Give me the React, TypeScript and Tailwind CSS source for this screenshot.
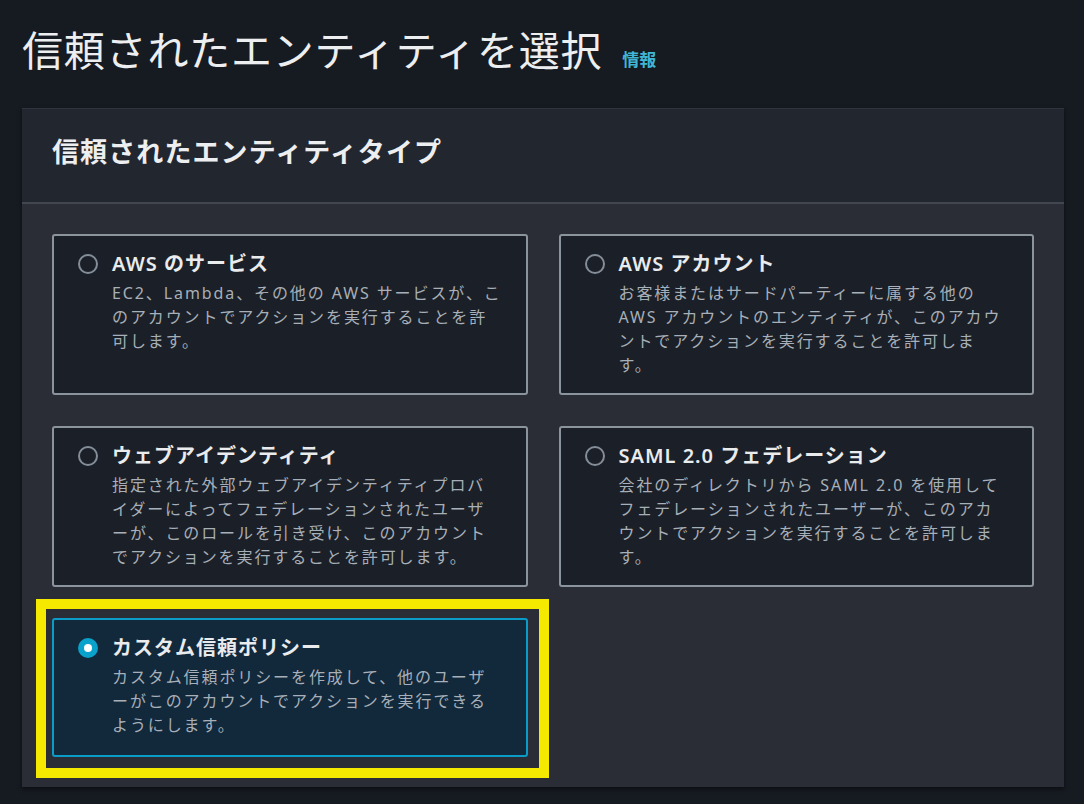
import React from 'react';

interface EntityOption {
  id: string;
  title: string;
  lines: string[];
}

const options: EntityOption[] = [
  {
    id: 'aws-service',
    title: 'AWS のサービス',
    lines: [
      'EC2、Lambda、その他の AWS サービスが、こ',
      'のアカウントでアクションを実行することを許',
      '可します。',
    ],
  },
  {
    id: 'aws-account',
    title: 'AWS アカウント',
    lines: [
      'お客様またはサードパーティーに属する他の',
      'AWS アカウントのエンティティが、このアカウ',
      'ントでアクションを実行することを許可しま',
      'す。',
    ],
  },
  {
    id: 'web-identity',
    title: 'ウェブアイデンティティ',
    lines: [
      '指定された外部ウェブアイデンティティプロバ',
      'イダーによってフェデレーションされたユーザ',
      'ーが、このロールを引き受け、このアカウント',
      'でアクションを実行することを許可します。',
    ],
  },
  {
    id: 'saml',
    title: 'SAML 2.0 フェデレーション',
    lines: [
      '会社のディレクトリから SAML 2.0 を使用して',
      'フェデレーションされたユーザーが、このアカ',
      'ウントでアクションを実行することを許可しま',
      'す。',
    ],
  },
  {
    id: 'custom',
    title: 'カスタム信頼ポリシー',
    lines: [
      'カスタム信頼ポリシーを作成して、他のユーザ',
      'ーがこのアカウントでアクションを実行できる',
      'ようにします。',
    ],
  },
];

function Radio({ checked }: { checked: boolean }) {
  if (checked) {
    return (
      <span className="flex h-5 w-5 items-center justify-center rounded-full bg-[#0aa2ca]">
        <span className="h-2 w-2 rounded-full bg-white" />
      </span>
    );
  }
  return <span className="h-5 w-5 rounded-full border-2 border-[#858e98]" />;
}

function OptionCard({ option, checked }: { option: EntityOption; checked: boolean }) {
  return (
    <div
      className={
        checked
          ? 'flex h-full gap-[14px] rounded-[3px] border-2 border-[#0a9cc6] bg-[#12283b] pl-6 pr-6 pt-[14px] pb-[18px]'
          : 'flex h-full gap-[14px] rounded-[3px] border-2 border-[#8b949d] bg-[#1b1f27] pl-6 pr-6 pt-[14px] pb-4'
      }
    >
      <div className="flex h-[28px] shrink-0 items-center">
        <Radio checked={checked} />
      </div>
      <div className="flex flex-col">
        <div className="text-[20px] leading-[28px] font-semibold tracking-[1px] text-[#e9ebed]">{option.title}</div>
        <div className="mt-[3px] text-[16px] leading-[24px] tracking-[1.9px] text-[#a7afb8]">
          {option.lines.map((line) => (
            <div key={line} className="whitespace-nowrap">
              {line}
            </div>
          ))}
        </div>
      </div>
    </div>
  );
}

export default function App() {
  return (
    <div
      className="min-h-[804px] bg-[#161a21] pl-[22px] pr-[20px] pt-[24px] pb-4"
      style={{ fontFamily: '"Noto Sans", "Noto Sans CJK JP", sans-serif' }}
    >
      <div className="mb-[32px] flex items-baseline gap-[20px]">
        <h1 className="text-[41px] leading-[52px] font-normal tracking-[0.8px] text-[#eceef0]">
          信頼されたエンティティを選択
        </h1>
        <span className="text-[17px] font-bold text-[#3fb6d6]">情報</span>
      </div>

      <div className="w-[1042px] border-t border-[#30343c] bg-[#2a2d35] shadow-[0_2px_4px_rgba(0,0,0,0.5)]">
        <div className="h-[95px] border-b-2 border-[#414750] bg-[#22262e] pl-[30px] pt-[25px]">
          <h2 className="text-[27px] leading-[36px] font-bold tracking-[1.1px] text-[#eceef0]">
            信頼されたエンティティタイプ
          </h2>
        </div>
        <div className="grid grid-cols-2 gap-[31px] px-[30px] pt-[30px] pb-[30px]">
          {options.map((option) => (
            <div key={option.id} className="relative">
              <OptionCard option={option} checked={option.id === 'custom'} />
              {option.id === 'custom' && (
                <div className="pointer-events-none absolute -top-[19px] -bottom-[21px] -left-4 -right-[21px] border-[10px] border-[#f5e900]" />
              )}
            </div>
          ))}
        </div>
      </div>
    </div>
  );
}
